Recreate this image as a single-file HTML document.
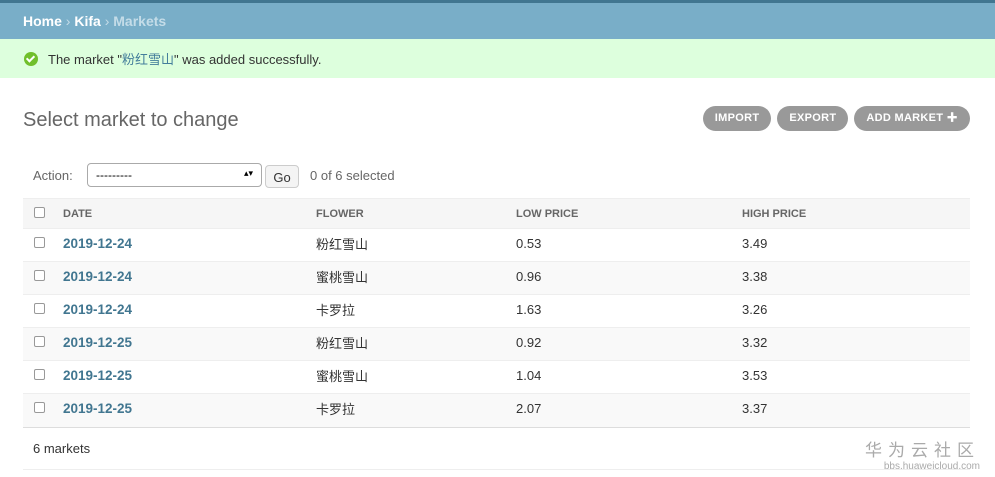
<!DOCTYPE html>
<html><head><meta charset="utf-8"><style>
*{margin:0;padding:0;box-sizing:border-box}
body{width:995px;height:477px;background:#fff;font-family:"Liberation Sans","Noto Sans CJK SC",sans-serif;color:#333;position:relative;overflow:hidden;font-size:13px}
.top{height:3px;background:#417690}
.bc{height:36px;background:#79aec8;color:#fff;font-size:14px;padding:10px 23px;font-weight:bold}
.bc span{color:#c4dce8;font-weight:normal}
.bc .cur{color:#c4dce8;font-weight:bold}
.msg{height:39px;background:#dfd;padding:10px 0 0 48px;font-size:13px;color:#333;position:relative}
.msg a{color:#447e9b}
.ok{position:absolute;left:24px;top:13px;width:14px;height:14px;border-radius:50%;background:#70bf2b}
.ok:after{content:"";position:absolute;left:4px;top:2px;width:3px;height:6px;border:solid #fff;border-width:0 2px 2px 0;transform:rotate(45deg)}
h1{position:absolute;left:23px;top:109px;font-size:20px;font-weight:300;color:#666}
.btns{position:absolute;top:106px;right:25px;display:flex;gap:6px}
.btn{background:#999;color:#fff;font-size:11px;font-weight:bold;height:25px;border-radius:13px;padding:0 12px;line-height:24px;letter-spacing:.3px}
.act{position:absolute;left:33px;top:168px;color:#666;font-size:13px}
.sel{position:absolute;left:87px;top:163px;width:175px;height:24px;border:1px solid #aaa;border-radius:4px;padding:4px 8px;font-size:12px;color:#000}
.go{position:absolute;left:265px;top:165px;width:34px;height:23px;border:1px solid #ccc;border-radius:4px;background:#f4f4f4;font-size:13px;text-align:center;padding-top:4px}
.cnt{position:absolute;left:310px;top:168px;color:#666}
table{position:absolute;left:23px;top:198px;width:947px;border-collapse:collapse}
th{background:#f6f6f6;height:30px;font-size:11px;color:#666;text-align:left;border-top:1px solid #eee}
td{height:33px;border-top:1px solid #eee;font-size:13px;padding-bottom:3px}
tr.alt td{background:#f9f9f9}
td a{color:#417690;font-weight:bold;font-size:13.5px}
.cb{width:11px;height:11px;border:1px solid #999;border-radius:2px;display:inline-block;margin-left:11px;background:#fff}
.foot{position:absolute;left:23px;top:427px;width:947px;height:43px;border-top:1px solid #ddd;border-bottom:1px solid #eee;padding:13px 10px;font-size:13px}
.wm{position:absolute;right:15px;top:436px;color:#aaa;text-align:right}
</style></head><body>
<div class="top"></div>
<div class="bc">Home <span>›</span> Kifa <span>›</span> <span class="cur">Markets</span></div>
<div class="msg"><div class="ok"></div>The market "<a>粉红雪山</a>" was added successfully.</div>
<h1>Select market to change</h1>
<div class="btns"><div class="btn">IMPORT</div><div class="btn">EXPORT</div><div class="btn">ADD MARKET ✚</div></div>
<div class="act">Action:</div>
<div class="sel">---------<span style="float:right;font-size:9px">▴▾</span></div>
<div class="go">Go</div>
<div class="cnt">0 of 6 selected</div>
<table>
<tr><th style="width:40px"><span class="cb"></span></th><th style="width:253px">DATE</th><th style="width:200px">FLOWER</th><th style="width:226px">LOW PRICE</th><th>HIGH PRICE</th></tr>
<tr><td><span class="cb"></span></td><td><a>2019-12-24</a></td><td>粉红雪山</td><td>0.53</td><td>3.49</td></tr>
<tr class="alt"><td><span class="cb"></span></td><td><a>2019-12-24</a></td><td>蜜桃雪山</td><td>0.96</td><td>3.38</td></tr>
<tr><td><span class="cb"></span></td><td><a>2019-12-24</a></td><td>卡罗拉</td><td>1.63</td><td>3.26</td></tr>
<tr class="alt"><td><span class="cb"></span></td><td><a>2019-12-25</a></td><td>粉红雪山</td><td>0.92</td><td>3.32</td></tr>
<tr><td><span class="cb"></span></td><td><a>2019-12-25</a></td><td>蜜桃雪山</td><td>1.04</td><td>3.53</td></tr>
<tr class="alt"><td><span class="cb"></span></td><td><a>2019-12-25</a></td><td>卡罗拉</td><td>2.07</td><td>3.37</td></tr>
</table>
<div class="foot">6 markets</div>
<div class="wm"><div style="font-size:17px;letter-spacing:6px">华为云社区</div><div style="font-size:10px">bbs.huaweicloud.com</div></div>
</body></html>
